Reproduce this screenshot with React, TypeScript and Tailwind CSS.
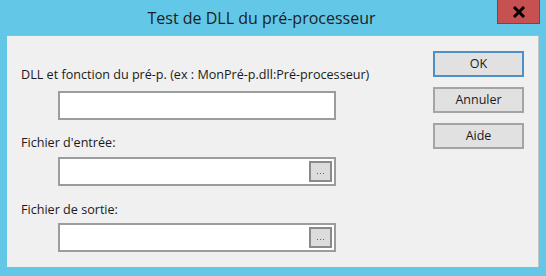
import { useState } from "react";

const font = { fontFamily: '"Open Sans", "Noto Sans", sans-serif' };

const Browse = () => (
  <button className="mr-[2px] flex h-[21px] w-[23px] items-center justify-center border-2 border-[#8a8a8a] bg-[#dcdcdc]">
    <span className="flex gap-[2px] pt-[3px]">
      <span className="h-[1px] w-[1px] bg-[#8a4a9a]" />
      <span className="h-[1px] w-[1px] bg-[#8a4a9a]" />
      <span className="h-[1px] w-[1px] bg-[#8a4a9a]" />
    </span>
  </button>
);

const Field = (props: { browse?: boolean; value: string; onChange: (v: string) => void }) => (
  <div className="ml-[37px] flex h-[29px] w-[278px] items-center border-2 border-[#9c9c9c] bg-white">
    <input
      value={props.value}
      onChange={(e) => props.onChange(e.target.value)}
      className="h-full min-w-0 flex-1 bg-transparent px-1 text-[12px] outline-none"
    />
    {props.browse && <Browse />}
  </div>
);

const DlgButton = (props: { label: string; primary?: boolean }) => (
  <button
    className={
      "h-[26px] w-[91px] border-2 bg-[#e1e1e1] text-[12.5px] text-[#1a1a1a] " +
      (props.primary ? "border-[#4f8fc4]" : "border-[#a4a4a4]")
    }
  >
    {props.label}
  </button>
);

export default function App() {
  const [dll, setDll] = useState("");
  const [entree, setEntree] = useState("");
  const [sortie, setSortie] = useState("");

  return (
    <div className="flex h-[276px] w-[546px] flex-col bg-[#63c8e8]" style={font}>
      {/* barre de titre */}
      <div className="flex h-[35px] items-start">
        <div className="flex-1 pl-[26px] pt-[6px] text-center text-[16px] text-[#1c1c1c]">
          Test de DLL du pré-processeur
        </div>
        <button className="mr-[6px] flex h-[24px] w-[43px] items-center justify-center border border-t-0 border-[#8e3b3b] bg-[#c75050]">
          <svg width="14" height="12" viewBox="0 0 14 12">
            <path d="M2 1 L12 11 M12 1 L2 11" stroke="#000" strokeWidth="3" />
          </svg>
        </button>
      </div>

      {/* corps */}
      <div className="mx-[7px] flex h-[232px] border-r border-t border-r-[#c4c4c4] border-t-[#9fb8c6] bg-[#f0f0f0]">
        <div className="flex flex-1 flex-col pl-[14px] pt-[30px] text-[12.6px] text-[#1a1a1a]">
          <label className="h-[17px] leading-[17px]">
            DLL et fonction du pré-p. (ex : MonPré-p.dll:Pré-processeur)
          </label>
          <div className="mt-[8px]">
            <Field value={dll} onChange={setDll} />
          </div>
          <label className="mt-[14px] h-[17px] leading-[17px]">Fichier d'entrée:</label>
          <div className="mt-[6px]">
            <Field browse value={entree} onChange={setEntree} />
          </div>
          <label className="mt-[15px] h-[17px] leading-[17px]">Fichier de sortie:</label>
          <div className="mt-[5px]">
            <Field browse value={sortie} onChange={setSortie} />
          </div>
        </div>
        <div className="mr-[14px] flex flex-col gap-[10px] pt-[15px]">
          <DlgButton label="OK" primary />
          <DlgButton label="Annuler" />
          <DlgButton label="Aide" />
        </div>
      </div>
    </div>
  );
}
